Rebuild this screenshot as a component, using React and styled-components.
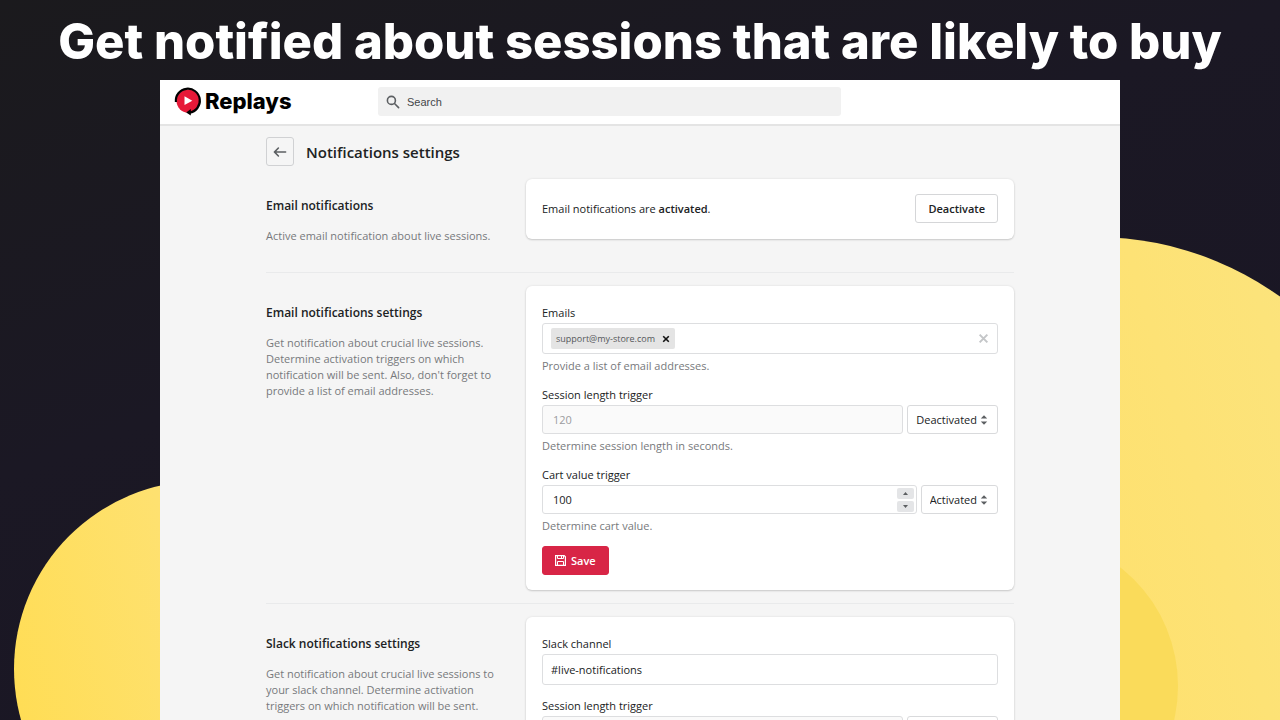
import React, { useState } from 'react';
import styled, { createGlobalStyle } from 'styled-components';

const GlobalStyle = createGlobalStyle`
  * {
    box-sizing: border-box;
  }

  body {
    margin: 0;
    background: #1b1824;
    color: #202223;
    font-family: 'Open Sans', 'Noto Sans', sans-serif;
    font-size: 11px;
    line-height: 16px;
  }

  button,
  input,
  select {
    font: inherit;
    color: inherit;
    margin: 0;
  }
`;

const Page = styled.div`
  position: relative;
  display: flex;
  flex-direction: column;
  height: 100vh;
  overflow: hidden;
  background: linear-gradient(160deg, #1b1a1d 0%, #1b1824 40%, #191525 100%);
`;

const Backdrop = styled.svg`
  position: absolute;
  inset: 0;
  width: 100%;
  height: 100%;
`;

const Headline = styled.h1`
  position: relative;
  flex: none;
  margin: 0;
  padding: 10px 0 6px;
  color: #fff;
  font-family: Inter, 'Open Sans', sans-serif;
  font-size: 49px;
  font-weight: 800;
  line-height: 64px;
  text-align: center;
  white-space: nowrap;
`;

const Frame = styled.div`
  position: relative;
  flex: 1;
  min-height: 0;
  width: 75%;
  margin: 0 auto;
  overflow: hidden;
  background: #f5f5f5;
`;

const TopBar = styled.header`
  display: grid;
  grid-template-columns: 204px minmax(0, 463px);
  align-items: center;
  padding: 7px 14px 8px;
  background: #fff;
  border-bottom: 2px solid #e4e4e4;
`;

const Brand = styled.a`
  display: flex;
  align-items: center;
  gap: 3px;
  color: #000;
  font-family: Inter, sans-serif;
  font-size: 22px;
  font-weight: 800;
  line-height: 29px;
  text-decoration: none;
`;

const SearchBox = styled.label`
  display: flex;
  align-items: center;
  gap: 6px;
  height: 29px;
  padding: 0 7px;
  border-radius: 3px;
  background: #f1f1f1;
  color: #5c5f62;
`;

const SearchInput = styled.input`
  flex: 1;
  min-width: 0;
  padding: 0;
  border: 0;
  outline: 0;
  background: none;
  font-family: 'Liberation Sans', Arial, sans-serif;

  &::placeholder {
    color: #44474a;
    opacity: 1;
  }
`;

const Content = styled.main`
  padding: 11px 106px 0;
`;

const TitleRow = styled.div`
  display: flex;
  align-items: center;
  gap: 12px;
`;

const BackButton = styled.button`
  display: flex;
  align-items: center;
  justify-content: center;
  width: 28px;
  height: 29px;
  padding: 0;
  border: 1px solid #d0d1d3;
  border-radius: 3px;
  background: none;
  color: #5c5f62;
`;

const PageTitle = styled.h2`
  margin: 0;
  font-size: 15px;
  font-weight: 600;
  line-height: 22px;
`;

const Section = styled.section`
  display: grid;
  grid-template-columns: minmax(0, 1fr) minmax(0, 2fr);
  gap: 16px;
  padding: 13px 0;

  & + & {
    border-top: 1px solid #e9eaeb;
  }
`;

const Annotation = styled.div`
  padding: 17px 16px 15px 0;
`;

const SectionTitle = styled.h3`
  margin: 0 0 12px;
  font-size: 12px;
  font-weight: 600;
  line-height: 20px;
`;

const Description = styled.p`
  margin: 0;
  color: #77797c;
`;

const Card = styled.div`
  padding: ${(props) => (props.$compact ? '15px 16px 16px' : '19px 16px 15px')};
  border-radius: 6px;
  background: #fff;
  box-shadow: 0 0 3px rgba(23, 24, 24, 0.08), 0 1px 2px rgba(0, 0, 0, 0.16);
`;

const StatusRow = styled.div`
  display: flex;
  align-items: center;
  justify-content: space-between;
`;

const Strong = styled.strong`
  font-weight: 600;
`;

const Button = styled.button`
  display: inline-flex;
  align-items: center;
  gap: 5px;
  height: 29px;
  padding: 0 12px;
  border: 1px solid ${(props) => (props.$primary ? '#d82546' : '#d5d6d8')};
  border-radius: 3px;
  background: ${(props) => (props.$primary ? '#d82546' : '#fff')};
  color: ${(props) => (props.$primary ? '#fff' : '#202223')};
  font-weight: 600;
`;

const Field = styled.div`
  display: flex;
  flex-direction: column;
  margin-bottom: ${(props) => (props.$last ? '12px' : '13px')};
`;

const Label = styled.label`
  align-self: flex-start;
  margin-bottom: 2px;
`;

const Help = styled.p`
  margin: 4px 0 0;
  color: #77797c;
`;

const ControlRow = styled.div`
  display: flex;
  gap: 4px;
`;

const Control = styled.div`
  display: flex;
  flex: 1;
  align-items: center;
  min-width: 0;
  min-height: ${(props) => (props.$tall ? '31px' : '29px')};
  padding: ${(props) => (props.$tall ? '0 8px' : '0 2px 0 10px')};
  border: 1px solid #dddee0;
  border-radius: 3px;
  background: ${(props) => (props.$disabled ? '#fafafa' : '#fff')};
  color: ${(props) => (props.$disabled ? '#9a9c9f' : '#202223')};
`;

const TextInput = styled.input`
  flex: 1;
  min-width: 0;
  padding: 0;
  border: 0;
  outline: 0;
  background: none;
  appearance: textfield;

  &::-webkit-inner-spin-button {
    appearance: none;
  }
`;

const Spinner = styled.div`
  display: flex;
  flex-direction: column;
  gap: 2px;
`;

const SpinButton = styled.button`
  display: flex;
  align-items: center;
  justify-content: center;
  width: 17px;
  height: 11px;
  padding: 0;
  border: 0;
  border-radius: 2px;
  background: #e4e5e7;
  color: #5c5f62;
`;

const SelectBox = styled.div`
  display: grid;
  align-items: center;

  & > * {
    grid-area: 1 / 1;
  }

  svg {
    justify-self: end;
    margin-right: 6px;
    color: #5c5f62;
    pointer-events: none;
  }
`;

const Select = styled.select`
  appearance: none;
  field-sizing: content;
  height: 29px;
  padding: 0 20px 0 8px;
  border: 1px solid #d9dadc;
  border-radius: 3px;
  background: #fff;
`;

const Tag = styled.span`
  display: flex;
  align-items: center;
  gap: 7px;
  height: 21px;
  padding: 0 5px;
  border-radius: 2px;
  background: #e4e4e4;
  color: #55585b;
  font-size: 9px;
`;

const IconButton = styled.button`
  display: flex;
  padding: 0;
  border: 0;
  background: none;
  color: ${(props) => (props.$muted ? '#c4c6c8' : '#111')};
`;

const LogoMark = () => (
  <svg width="28" height="29" viewBox="0 0 28 29" aria-hidden="true">
    <circle cx="14" cy="14" r="11.5" fill="#e61938" />
    <path
      d="M1.9 15A12 12 0 1 1 15.5 25.6"
      fill="none"
      stroke="#000"
      strokeWidth="2.2"
    />
    <path d="M16.8 22v6.4l-4.6-2.8z" fill="#000" />
    <path d="M10.5 9.3v8.8l7.8-4.4z" fill="#fff" />
  </svg>
);

const SearchIcon = () => (
  <svg width="16" height="16" viewBox="0 0 20 20" fill="currentColor" aria-hidden="true">
    <path d="M8 12a4 4 0 1 1 0-8 4 4 0 0 1 0 8zm9.707 4.293-4.82-4.82A5.968 5.968 0 0 0 14 8a6 6 0 1 0-6 6 5.968 5.968 0 0 0 3.473-1.113l4.82 4.82a.997.997 0 0 0 1.414 0 .999.999 0 0 0 0-1.414z" />
  </svg>
);

const ArrowLeftIcon = () => (
  <svg width="16" height="16" viewBox="0 0 20 20" fill="currentColor" aria-hidden="true">
    <path d="M17 9H5.414l3.293-3.293a.999.999 0 1 0-1.414-1.414l-5 5a.999.999 0 0 0 0 1.414l5 5a.997.997 0 0 0 1.414 0 .999.999 0 0 0 0-1.414L5.414 11H17a1 1 0 1 0 0-2z" />
  </svg>
);

const SelectIcon = () => (
  <svg width="16" height="16" viewBox="0 0 20 20" fill="currentColor" aria-hidden="true">
    <path d="m10 16-4-4h8l-4 4zm0-12 4 4H6l4-4z" />
  </svg>
);

const CrossIcon = ({ size, weight }) => (
  <svg width={size} height={size} viewBox="0 0 10 10" aria-hidden="true">
    <path d="M1.5 1.5l7 7M8.5 1.5l-7 7" stroke="currentColor" strokeWidth={weight} />
  </svg>
);

const CaretIcon = ({ down }) => (
  <svg width="5" height="3" viewBox="0 0 5 3" fill="currentColor" aria-hidden="true">
    <path d={down ? 'M0 0h5L2.5 3z' : 'M0 3h5L2.5 0z'} />
  </svg>
);

const SaveIcon = () => (
  <svg width="11" height="11" viewBox="0 0 11 11" fill="none" stroke="currentColor" aria-hidden="true">
    <path d="M.6.6h8.6l1.2 1.2v8.6H.6z" strokeWidth="1.2" />
    <path d="M2.5.5v3h6v-3M2.5 10.5v-4h6v4M6.5 1v2" />
  </svg>
);

const StateSelect = ({ label, defaultValue }) => (
  <SelectBox>
    <Select aria-label={label} defaultValue={defaultValue}>
      <option>Activated</option>
      <option>Deactivated</option>
    </Select>
    <SelectIcon />
  </SelectBox>
);

const SessionLengthField = ({ id }) => (
  <Field>
    <Label htmlFor={id}>Session length trigger</Label>
    <ControlRow>
      <Control $disabled>
        <TextInput id={id} type="number" defaultValue="120" disabled />
      </Control>
      <StateSelect label="Session length trigger state" defaultValue="Deactivated" />
    </ControlRow>
    <Help>Determine session length in seconds.</Help>
  </Field>
);

const CartValueField = () => {
  const [value, setValue] = useState(100);

  return (
    <Field $last>
      <Label htmlFor="cart-value">Cart value trigger</Label>
      <ControlRow>
        <Control>
          <TextInput
            id="cart-value"
            type="number"
            value={value}
            onChange={(e) => setValue(Number(e.target.value))}
          />
          <Spinner>
            <SpinButton type="button" aria-label="Increase" onClick={() => setValue(value + 1)}>
              <CaretIcon />
            </SpinButton>
            <SpinButton type="button" aria-label="Decrease" onClick={() => setValue(value - 1)}>
              <CaretIcon down />
            </SpinButton>
          </Spinner>
        </Control>
        <StateSelect label="Cart value trigger state" defaultValue="Activated" />
      </ControlRow>
      <Help>Determine cart value.</Help>
    </Field>
  );
};

const App = () => (
  <>
    <GlobalStyle />
    <Page>
      <Backdrop viewBox="0 0 1280 720" preserveAspectRatio="none" aria-hidden="true">
        <defs>
          <linearGradient id="sun" x1="0" y1="0.6" x2="1" y2="0.3">
            <stop offset="0" stopColor="#ffdd55" />
            <stop offset="0.5" stopColor="#fee170" />
            <stop offset="1" stopColor="#fbe47f" />
          </linearGradient>
        </defs>
        <circle cx="202" cy="669" r="188" fill="url(#sun)" />
        <circle cx="1095" cy="554" r="317" fill="url(#sun)" />
        <circle cx="1027" cy="686" r="151" fill="#fadb5a" />
      </Backdrop>

      <Headline>Get notified about sessions that are likely to buy</Headline>

      <Frame>
        <TopBar>
          <Brand href="#">
            <LogoMark />
            Replays
          </Brand>
          <SearchBox>
            <SearchIcon />
            <SearchInput type="search" placeholder="Search" aria-label="Search" />
          </SearchBox>
        </TopBar>

        <Content>
          <TitleRow>
            <BackButton type="button" aria-label="Back">
              <ArrowLeftIcon />
            </BackButton>
            <PageTitle>Notifications settings</PageTitle>
          </TitleRow>

          <Section>
            <Annotation>
              <SectionTitle>Email notifications</SectionTitle>
              <Description>Active email notification about live sessions.</Description>
            </Annotation>
            <div>
              <Card $compact>
                <StatusRow>
                  <span>
                    Email notifications are <Strong>activated</Strong>.
                  </span>
                  <Button type="button">Deactivate</Button>
                </StatusRow>
              </Card>
            </div>
          </Section>

          <Section>
            <Annotation>
              <SectionTitle>Email notifications settings</SectionTitle>
              <Description>
                Get notification about crucial live sessions. Determine activation triggers on
                which notification will be sent. Also, don't forget to provide a list of email
                addresses.
              </Description>
            </Annotation>
            <Card>
              <Field>
                <Label htmlFor="emails">Emails</Label>
                <ControlRow>
                  <Control $tall>
                    <Tag>
                      support@my-store.com
                      <IconButton type="button" aria-label="Remove support@my-store.com">
                        <CrossIcon size="8" weight="2" />
                      </IconButton>
                    </Tag>
                    <TextInput id="emails" type="text" />
                    <IconButton type="button" aria-label="Clear emails" $muted>
                      <CrossIcon size="11" weight="1.8" />
                    </IconButton>
                  </Control>
                </ControlRow>
                <Help>Provide a list of email addresses.</Help>
              </Field>
              <SessionLengthField id="email-session-length" />
              <CartValueField />
              <Button type="submit" $primary>
                <SaveIcon />
                Save
              </Button>
            </Card>
          </Section>

          <Section>
            <Annotation>
              <SectionTitle>Slack notifications settings</SectionTitle>
              <Description>
                Get notification about crucial live sessions to your slack channel. Determine
                activation triggers on which notification will be sent.
              </Description>
            </Annotation>
            <Card>
              <Field>
                <Label htmlFor="slack-channel">Slack channel</Label>
                <ControlRow>
                  <Control $tall>
                    <TextInput id="slack-channel" type="text" defaultValue="#live-notifications" />
                  </Control>
                </ControlRow>
              </Field>
              <SessionLengthField id="slack-session-length" />
            </Card>
          </Section>
        </Content>
      </Frame>
    </Page>
  </>
);

export default App;
